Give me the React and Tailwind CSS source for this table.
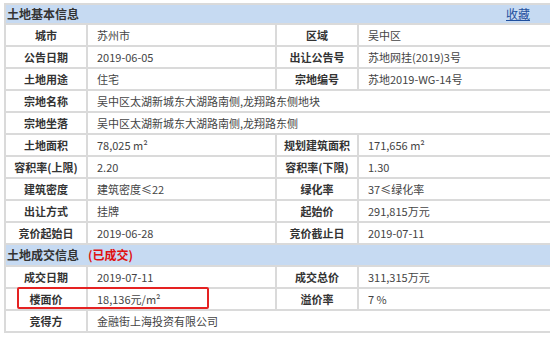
const rows = [
  ['城市', '苏州市', '区域', '吴中区'],
  ['公告日期', '2019-06-05', '出让公告号', '苏地网挂(2019)3号'],
  ['土地用途', '住宅', '宗地编号', '苏地2019-WG-14号'],
  ['宗地名称', '吴中区太湖新城东大湖路南侧,龙翔路东侧地块'],
  ['宗地坐落', '吴中区太湖新城东大湖路南侧,龙翔路东侧'],
  ['土地面积', '78,025 m²', '规划建筑面积', '171,656 m²'],
  ['容积率(上限)', '2.20', '容积率(下限)', '1.30'],
  ['建筑密度', '建筑密度≤22', '绿化率', '37≤绿化率'],
  ['出让方式', '挂牌', '起始价', '291,815万元'],
  ['竞价起始日', '2019-06-28', '竞价截止日', '2019-07-11'],
];

const dealRows = [
  ['成交日期', '2019-07-11', '成交总价', '311,315万元'],
  ['楼面价', '18,136元/m²', '溢价率', '7 %'],
  ['竞得方', '金融街上海投资有限公司'],
];

function Label({ children }) {
  return (
    <div className="flex h-[20px] items-center justify-center bg-white text-[11px] font-bold text-[#333]">
      {children}
    </div>
  );
}

function Value({ children, wide }) {
  return (
    <div
      className={`flex h-[20px] items-center bg-white pl-[9px] text-[11px] text-[#444] ${wide ? 'col-span-3' : ''}`}
    >
      {children}
    </div>
  );
}

function Row({ cells }) {
  if (cells.length === 2) {
    return (
      <>
        <Label>{cells[0]}</Label>
        <Value wide>{cells[1]}</Value>
      </>
    );
  }
  return (
    <>
      <Label>{cells[0]}</Label>
      <Value>{cells[1]}</Value>
      <Label>{cells[2]}</Label>
      <Value>{cells[3]}</Value>
    </>
  );
}

export default function App() {
  return (
    <div
      className="h-[337px] w-[550px] overflow-hidden bg-white pl-[4px] pt-[3px]"
      style={{ fontFamily: '"Noto Sans CJK SC", "Noto Sans", sans-serif' }}
    >
      <div className="relative grid w-[556px] grid-cols-[80px_187px_80px_1fr] gap-[2px] border-2 border-[#dadada] bg-[#dadada]">
        <div className="col-span-4 flex h-[18px] items-center bg-[#c6daf2] pl-[1px] pr-[28px] text-[12px] font-bold text-[#333]">
          <span>土地基本信息</span>
          <span className="ml-auto font-normal text-[#1f4f9e] underline">收藏</span>
        </div>
        {rows.map((r) => (
          <Row key={r[0]} cells={r} />
        ))}
        <div className="col-span-4 flex h-[20px] items-center bg-[#c6daf2] pl-[1px] text-[12px] font-bold text-[#333]">
          <span>土地成交信息</span>
          <span className="ml-[9px] text-[#e01010]">(已成交)</span>
        </div>
        {dealRows.map((r) => (
          <Row key={r[0]} cells={r} />
        ))}
        <div className="pointer-events-none absolute left-[11px] top-[282px] h-[22px] w-[192px] rounded-[2px] border-2 border-[#e52222]" />
      </div>
    </div>
  );
}
